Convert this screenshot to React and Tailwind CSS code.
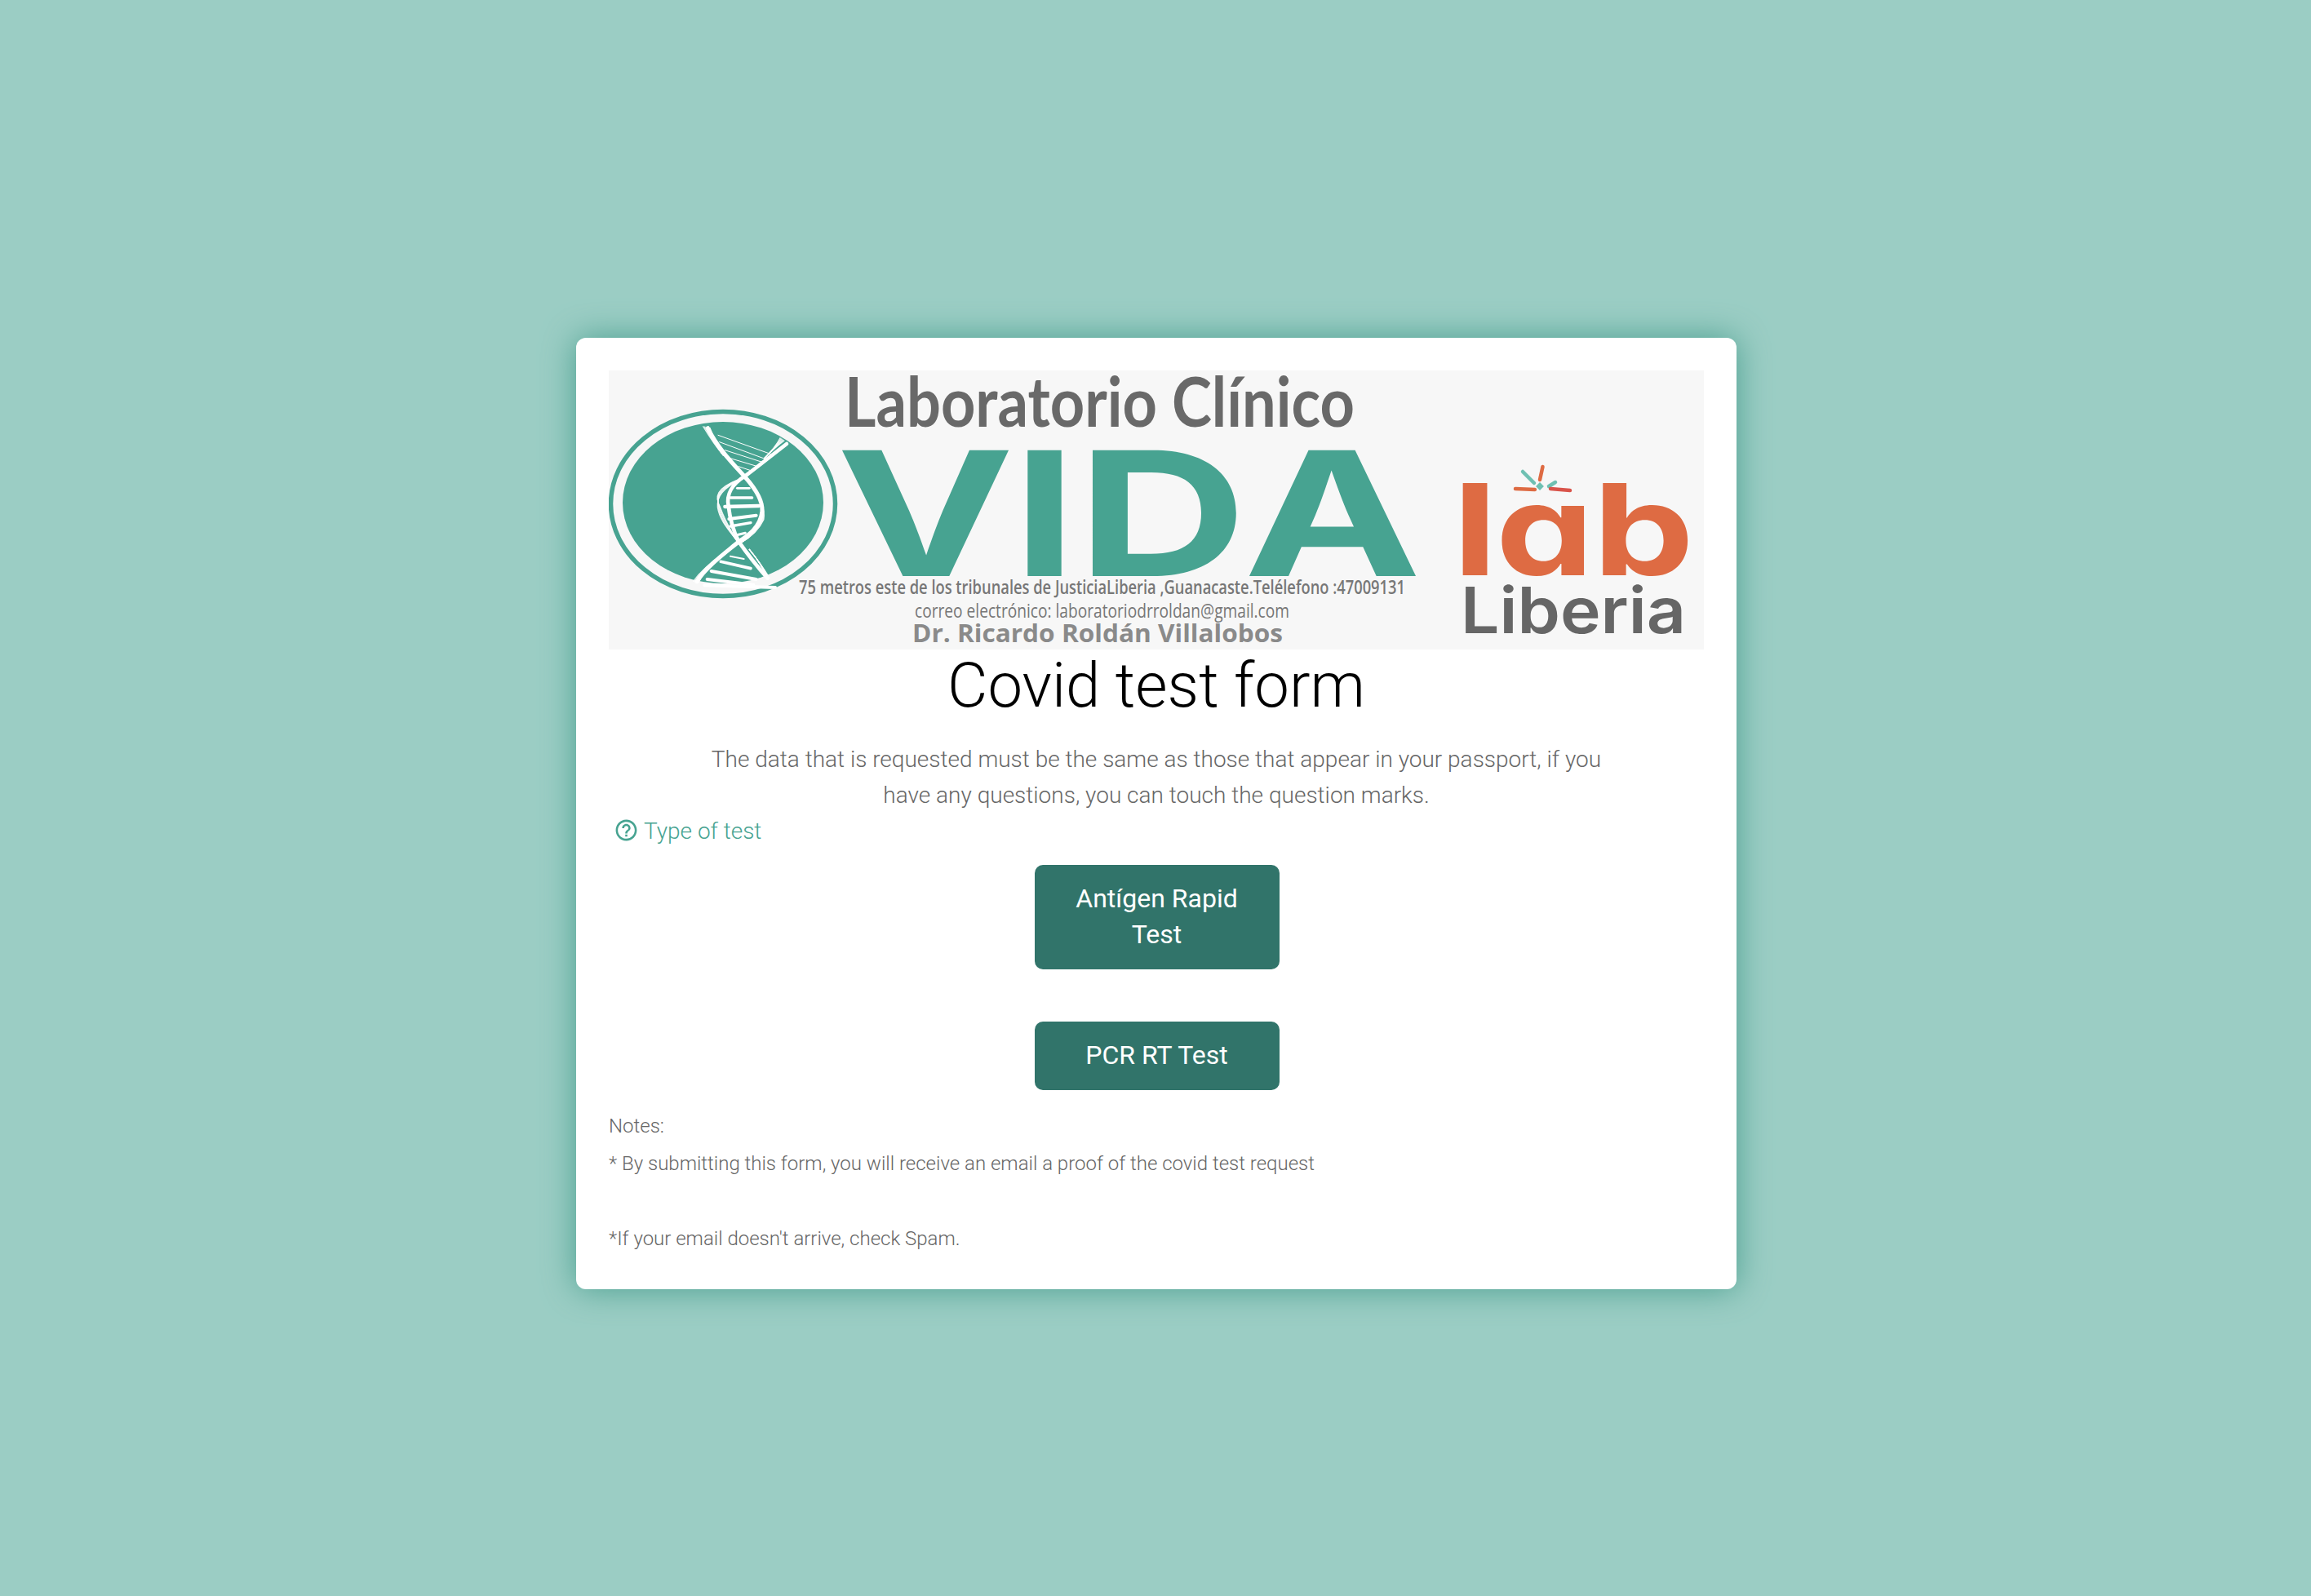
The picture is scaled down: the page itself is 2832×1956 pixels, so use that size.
import React from 'react';
import { MdHelpOutline } from 'react-icons/md';

// zoomed-in trace coords, scaled back down by the group transform
const rungs = [
  [300, 40, 495, 110, 3], [305, 65, 480, 130, 3], [325, 95, 465, 140, 3], [345, 125, 445, 155, 3], [375, 155, 420, 170, 3],
  [370, 235, 415, 235, 8], [345, 270, 425, 270, 10], [325, 303, 450, 300, 13], [340, 348, 440, 335, 12], [345, 375, 420, 362, 10], [365, 408, 400, 400, 9],
  [345, 485, 395, 495, 6], [310, 505, 420, 530, 11], [275, 540, 440, 570, 12], [260, 570, 430, 590, 12], [250, 592, 510, 600, 12],
];

// fan of thin lines along the ribbons
const fan = [0, 1, 2, 3, 4, 5];

const Dna = () => (
  <g transform="translate(34 66) scale(0.3333)" fill="none" stroke="#ffffff" strokeLinecap="round">
    <path d="M262 14 C300 90 350 140 400 195 C440 240 465 280 462 320 C455 380 410 410 375 432 C330 470 260 520 222 578" strokeWidth="15" />
    <path d="M552 72 C490 120 440 160 400 190 C350 220 330 260 338 300 C345 360 360 400 375 430 C410 480 450 530 482 566" strokeWidth="14" />
    {fan.map((i) => (
      <g key={i} strokeWidth="3.5" opacity="0.9">
        <path d={`M${380 - i * 2} 205 C${320 - i * 5} 235 ${295 - i * 2} 265 ${298 + i * 2} 305 C${305 + i * 4} 355 ${345 + i} 395 370 430`} />
        <path d={`M420 225 C${458 + i * 2} 270 ${474 - i * 2} 310 ${468 - i * 2} 350 C${452 - i * 3} 385 ${420 - i * 2} ${415 + i} 385 435`} />
        <path d={`M${245 + i * 5} ${8 + i} C${270 + i * 3} 50 290 80 320 115`} />
        <path d={`M${208 + i * 4} ${578 + i} C${235 + i * 3} 540 270 510 320 475`} />
        <path d={`M${490 - i * 3} ${566 - i} C465 525 440 490 415 460`} />
        <path d={`M${528 + i * 3} ${50 + i * 2} C510 85 490 105 470 125`} />
      </g>
    ))}
    {rungs.map(([x1, y1, x2, y2, w], i) => (
      <line key={i} x1={x1} y1={y1} x2={x2} y2={y2} strokeWidth={w} />
    ))}
  </g>
);

const Logo = () => (
  <svg viewBox="0 0 1342 342" className="block h-[342px] w-[1342px] bg-[#f7f7f7]">
    <ellipse cx="140" cy="163.5" rx="137.5" ry="113" fill="none" stroke="#47a391" strokeWidth="5.5" />
    <ellipse cx="140" cy="162" rx="123" ry="99" fill="#47a391" />
    <Dna />

    <text x="289" y="69" fontSize="84" fontWeight="700" fill="#696969" textLength="625" lengthAdjust="spacingAndGlyphs" className="font-['Lato',sans-serif]">Laboratorio Clínico</text>

    <g fontSize="212" fontWeight="700" fill="#47a391" className="font-['Inter',sans-serif]">
      <text x="279" y="252" textLength="218" lengthAdjust="spacingAndGlyphs">V</text>
      <text x="495" y="252" textLength="78" lengthAdjust="spacingAndGlyphs">I</text>
      <text x="574" y="252" textLength="208" lengthAdjust="spacingAndGlyphs">D</text>
      <text x="778" y="252" textLength="218" lengthAdjust="spacingAndGlyphs">A</text>
    </g>

    <g fill="#777777" className="font-['Open_Sans',sans-serif]">
      <text x="233" y="274" fontSize="24" fontWeight="600" textLength="743" lengthAdjust="spacingAndGlyphs">75 metros este de los tribunales de JusticiaLiberia ,Guanacaste.Telélefono :47009131</text>
      <text x="375" y="303" fontSize="24" fontWeight="500" textLength="459" lengthAdjust="spacingAndGlyphs">correo electrónico: laboratoriodrroldan@gmail.com</text>
      <text x="372" y="333" fontSize="31" fontWeight="700" fill="#8a8a8a" textLength="454" lengthAdjust="spacingAndGlyphs">Dr. Ricardo Roldán Villalobos</text>
    </g>

    <g fontSize="156" fontWeight="700" fill="#de6b43" className="font-['Inter',sans-serif] [font-feature-settings:'cv11']">
      <text x="1034" y="251" textLength="55" lengthAdjust="spacingAndGlyphs">l</text>
      <text x="1087" y="251" textLength="120" lengthAdjust="spacingAndGlyphs">a</text>
      <text x="1206" y="251" textLength="124" lengthAdjust="spacingAndGlyphs">b</text>
    </g>
    <g fill="none" strokeWidth="4.5" strokeLinecap="round">
      <line x1="1144.5" y1="118" x2="1141" y2="134" stroke="#de6b43" />
      <line x1="1120" y1="124" x2="1134" y2="138" stroke="#6fc0b2" />
      <line x1="1160" y1="137" x2="1152" y2="142" stroke="#6fc0b2" />
      <line x1="1111" y1="145" x2="1135" y2="146" stroke="#de6b43" />
      <line x1="1154" y1="145" x2="1178" y2="147" stroke="#d9534a" />
    </g>
    <rect x="1137.5" y="138.5" width="7" height="7" transform="rotate(45 1141 142)" fill="#6fc0b2" />
    <text x="1044" y="322" fontSize="78" fontWeight="600" fill="#666666" textLength="276" lengthAdjust="spacingAndGlyphs" className="font-['Inter',sans-serif]">Liberia</text>
  </svg>
);

const TestButton = ({ children }) => (
  <button className="w-[300px] rounded-[10px] bg-[#31746a] px-5 pb-[21px] pt-[19px] text-center text-[32px] leading-[44px] text-white">
    {children}
  </button>
);

const App = () => {
  return (
    <div className="min-h-[1956px] bg-[#9bcdc4] pl-[2px] pt-[414px] font-['Roboto',sans-serif]">
      <div className="mx-auto w-[1422px] rounded-[12px] bg-white px-10 pb-[39px] pt-10 shadow-[0_0_40px_#4a9f8f]">
        <Logo />
        <h1 className="mt-px text-center text-[76px] font-light leading-[86px] text-black">Covid test form</h1>
        <p className="mx-auto mt-[26px] w-[1100px] text-center text-[28px] font-light leading-[44px] text-[#666666]">
          The data that is requested must be the same as those that appear in your passport, if you have any questions, you can touch the question marks.
        </p>
        <div className="flex h-[43px] items-center pl-[6px] text-[28px] font-light text-[#47a391]">
          <MdHelpOutline className="-mt-[3px] mr-[6px] h-[31px] w-[31px]" />
          <span>Type of test</span>
        </div>
        <div className="mt-5 flex flex-col items-center gap-16 pl-px">
          <TestButton>Antígen Rapid Test</TestButton>
          <TestButton>PCR RT Test</TestButton>
        </div>
        <div className="mt-[21px] text-[24px] font-light leading-[46px] text-[#666666]">
          <p>Notes:</p>
          <p>* By submitting this form, you will receive an email a proof of the covid test request</p>
          <p className="mt-[46px]">*If your email doesn't arrive, check Spam.</p>
        </div>
      </div>
    </div>
  );
};

export default App;
